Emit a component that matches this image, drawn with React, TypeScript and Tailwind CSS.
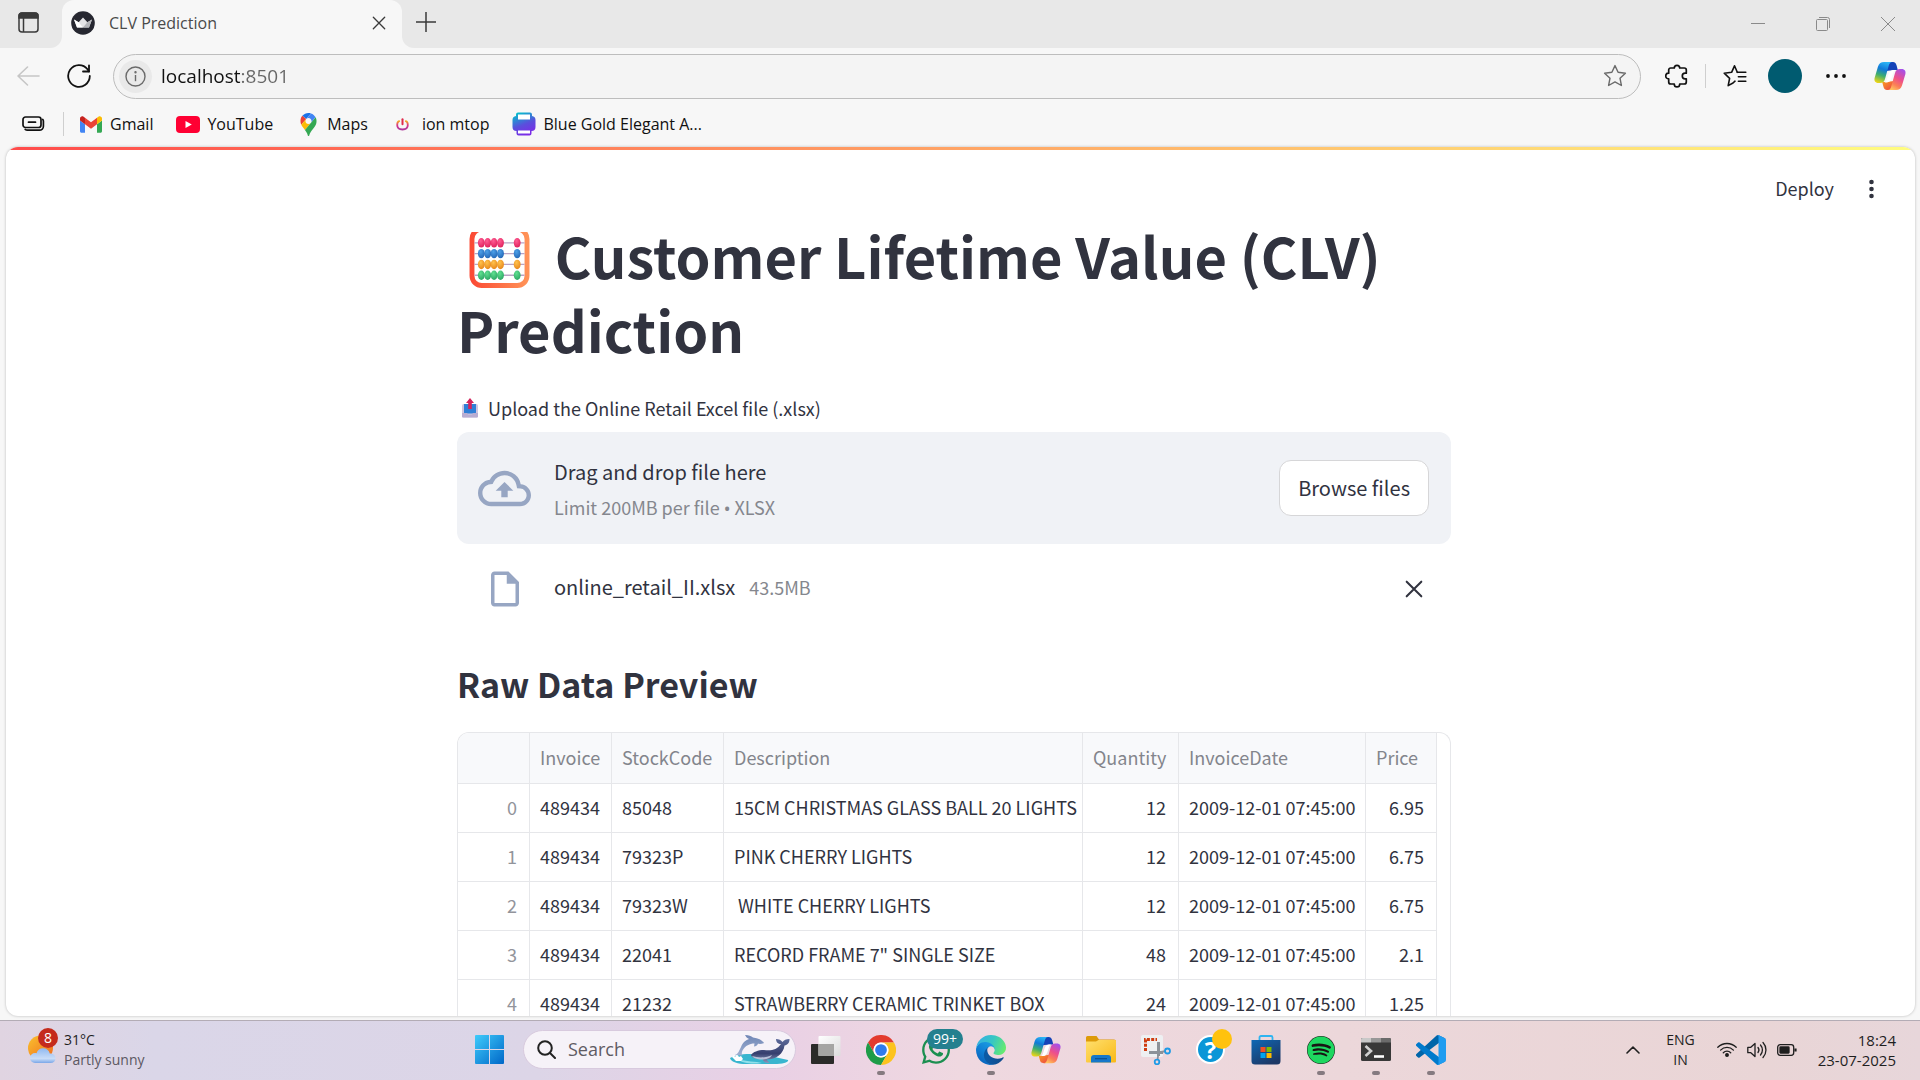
import type { ReactNode } from "react";
import { FaSpotify, FaWhatsapp } from "react-icons/fa";
import { MdOutlineCloudUpload, MdOutlineInsertDriveFile } from "react-icons/md";

/* ---------- browser icons ---------- */

function TabActionsIcon() {
  return (
    <svg width="21" height="21" viewBox="0 0 21 21" fill="none" stroke="#3a3a3a" strokeWidth="1.5">
      <rect x="1" y="1" width="19" height="19" rx="3" />
      <path d="M1 6V4a3 3 0 0 1 3-3h13a3 3 0 0 1 3 3v2z" fill="#3a3a3a" />
      <path d="M5.5 6v14" />
    </svg>
  );
}

function CrownIcon() {
  return (
    <svg width="24" height="24" viewBox="0 0 24 24">
      <circle cx="12" cy="12" r="11.8" fill="#262730" />
      <path d="M3 8.6l4.6 2.6L12 6.5l4.4 4.7L21 8.6 18 16.4H6z" fill="#e4e4e6" />
      <path d="M3 8.6l4.6 2.6L12 16.4H6z" fill="#fff" />
      <path d="M21 8.6l-4.6 2.6L12 16.4h6z" fill="#b4b5b9" />
    </svg>
  );
}

function CrossIcon({ size, color, width }: { size: number; color: string; width: number }) {
  return (
    <svg width={size} height={size} viewBox="0 0 16 16" fill="none" stroke={color} strokeWidth={width} strokeLinecap="round">
      <path d="M1.5 1.5l13 13M14.5 1.5l-13 13" />
    </svg>
  );
}

function StarIcon() {
  return (
    <svg width="24" height="24" viewBox="0 0 24 24" fill="none" stroke="#6b6b6b" strokeWidth="1.4" strokeLinejoin="round">
      <path d="M12 1.6l3.1 6.7 7.3.9-5.4 5 1.4 7.3-6.4-3.6-6.4 3.6L7 14.2l-5.4-5 7.3-.9z" />
    </svg>
  );
}

function FavoritesIcon() {
  return (
    <svg width="24" height="24" viewBox="0 0 24 24" fill="none" stroke="#111" strokeWidth="1.6" strokeLinejoin="round" strokeLinecap="round">
      <path d="M14.3 8.3L11.5 1.8 8.6 8.3l-7.4.9 5.4 5.1-1.4 7.3 4.8-2.6 2-1.8" />
      <path d="M14.3 8.3h8.5M15.4 12.7h7.4M15.4 17.2h7.4" />
    </svg>
  );
}

function PuzzleIcon() {
  return (
    <svg width="24" height="24" viewBox="0 0 24 24" fill="none" stroke="#111" strokeWidth="1.7" strokeLinejoin="round">
      <path d="M5.700 4h3.600a2.700 2.700 0 0 1 5.400 0h4.600a2 2 0 0 1 2 2v3.200h-1.200a2.800 2.800 0 0 0 0 5.600h1.200V18a2 2 0 0 1-2 2h-4.600v.2a2.700 2.700 0 0 1-5.400 0V20H5.700a2 2 0 0 1-2-2v-3.200h-.2a2.800 2.800 0 0 1 0-5.600h.2V6a2 2 0 0 1 2-2z" />
    </svg>
  );
}

function CopilotIcon({ id, size }: { id: string; size: number }) {
  return (
    <svg width={size} height={size} viewBox="0 0 32 30">
      <defs>
        <linearGradient id={`${id}-cool`} x1="0.6" y1="0" x2="0.3" y2="1">
          <stop offset="0" stopColor="#2bb4f5" />
          <stop offset="0.35" stopColor="#1179d8" />
          <stop offset="0.65" stopColor="#3fae6e" />
          <stop offset="1" stopColor="#e8d418" />
        </linearGradient>
        <linearGradient id={`${id}-warm`} x1="0.8" y1="0" x2="0.3" y2="1">
          <stop offset="0" stopColor="#a350ec" />
          <stop offset="0.45" stopColor="#ee4f8b" />
          <stop offset="0.75" stopColor="#fb7e57" />
          <stop offset="1" stopColor="#ffc35f" />
        </linearGradient>
        <linearGradient id={`${id}-orange`} x1="0" y1="0" x2="1" y2="1">
          <stop offset="0" stopColor="#fba01c" />
          <stop offset="1" stopColor="#ea3d4b" />
        </linearGradient>
      </defs>
      <path d="M13 3C14 1.6 15 1 18 1c3.400 0 4 1.500 4.600 3.600L23.800 9H20l-8 1z" fill="#1443b8" />
      <path d="M19 27c-1 1.400-2 2-5 2-3.400 0-4-1.500-4.600-3.600L8.200 21H12l8-1z" fill={`url(#${id}-orange)`} />
      <path d="M10 1h8.500c-2.400 0-3.200 1.800-3.800 3.800L11 18c-.9 3-2.400 4-5 4H4.500C1 22 0 19.500.6 17L4 5.500C5 2.200 7 1 10 1z" fill={`url(#${id}-cool)`} />
      <path d="M22 29h-8.500c2.400 0 3.200-1.800 3.800-3.800L21 12c.9-3 2.400-4 5-4h1.500c3.500 0 4.500 2.500 3.900 5L28 24.500C27 27.800 25 29 22 29z" fill={`url(#${id}-warm)`} />
      <path d="M20.500 9c-3.800 0-5 1.500-6 4.500l-1.500 4.500c-.7 2-1.300 3-2.500 3.500h1c3.800 0 5-1.500 6-4.500l1.500-4.500c.7-2 1.300-3 2.500-3.500z" fill="#fff" />
    </svg>
  );
}

function GmailIcon() {
  return (
    <svg width="22" height="17" viewBox="52 42 88 66">
      <path fill="#4285f4" d="M58 108h14V74L52 59v43c0 3.320 2.690 6 6 6" />
      <path fill="#34a853" d="M120 108h14c3.320 0 6-2.690 6-6V59l-20 15" />
      <path fill="#fbbc04" d="M120 48v26l20-15v-8c0-7.420-8.470-11.650-14.400-7.200" />
      <path fill="#ea4335" d="M72 74V48l24 18 24-18v26L96 92" />
      <path fill="#c5221f" d="M52 51v8l20 15V48l-5.600-4.200c-5.940-4.450-14.400-.22-14.400 7.200" />
    </svg>
  );
}

function YouTubeIcon() {
  return (
    <svg width="24" height="17" viewBox="0 0 24 17">
      <rect width="24" height="17" rx="4" fill="#ff0033" />
      <path d="M9.500 5v7l6.300-3.500z" fill="#fff" />
    </svg>
  );
}

function MapsIcon() {
  return (
    <svg width="17" height="23" viewBox="0 0 92.300 132.300">
      <path fill="#1a73e8" d="M60.200 2.200C55.800.8 51 0 46.100 0 32 0 19.300 6.400 10.800 16.500l21.800 18.300L60.200 2.200z" />
      <path fill="#ea4335" d="M10.800 16.500C4.100 24.500 0 34.900 0 46.100c0 8.700 1.700 15.700 4.600 22l28-33.300-21.800-18.300z" />
      <path fill="#4285f4" d="M46.200 28.500c9.800 0 17.700 7.900 17.700 17.700 0 4.300-1.600 8.300-4.200 11.400 0 0 13.900-16.600 27.500-32.700-5.600-10.800-15.300-19-27-22.700L32.600 34.800c3.300-3.800 8.100-6.300 13.600-6.300" />
      <path fill="#fbbc04" d="M46.200 63.800c-9.800 0-17.700-7.900-17.700-17.700 0-4.300 1.500-8.300 4.100-11.300l-28 33.300c4.800 10.600 12.800 19.200 21 29.900l34.100-40.500c-3.300 3.900-8.100 6.300-13.500 6.300" />
      <path fill="#34a853" d="M59.100 109.200c15.400-24.100 33.300-35 33.300-63 0-7.700-1.900-14.900-5.200-21.300L25.600 98c2.600 3.400 5.300 7.300 7.900 11.300 9.400 14.500 6.800 23.100 12.800 23.100s3.400-8.700 12.800-23.200" />
    </svg>
  );
}

function IonIcon() {
  return (
    <svg width="13" height="13" viewBox="0 0 13 13" fill="none" strokeLinecap="round">
      <defs>
        <linearGradient id="ion" x1="0" y1="0" x2="0" y2="1">
          <stop offset="0" stopColor="#f5a623" />
          <stop offset="0.5" stopColor="#d6338a" />
          <stop offset="1" stopColor="#b03a9b" />
        </linearGradient>
      </defs>
      <path d="M3.200 3.200C1.500 3.600 1.200 5 1.200 7c0 3 1.300 4.500 5.300 4.500s5.300-1.500 5.300-4.500c0-2-.3-3.400-2-3.800" stroke="url(#ion)" strokeWidth="1.800" />
      <path d="M6.500 1.200v5" stroke="#e02b4b" strokeWidth="2" />
    </svg>
  );
}

function PrinterIcon() {
  return (
    <svg width="24" height="24" viewBox="0 0 24 24">
      <defs>
        <linearGradient id="printer" x1="0.2" y1="0" x2="0.6" y2="1">
          <stop offset="0" stopColor="#00c4cc" />
          <stop offset="0.55" stopColor="#5a4fdc" />
          <stop offset="1" stopColor="#7d2ae8" />
        </linearGradient>
      </defs>
      <path d="M6 .5h12a2 2 0 0 1 2 2V4a4 4 0 0 1 3.500 4v7a4 4 0 0 1-4 4v2.500a2 2 0 0 1-2 2h-11a2 2 0 0 1-2-2V19a4 4 0 0 1-4-4V8A4 4 0 0 1 4 4V2.500a2 2 0 0 1 2-2z" fill="url(#printer)" />
      <rect x="6" y="2.500" width="12" height="5" fill="#fff" />
      <rect x="6" y="18.500" width="12" height="3" fill="#fff" />
    </svg>
  );
}

/* ---------- page icons ---------- */

function AbacusIcon() {
  const rows = [
    { y: 11, light: "#ff5c93", dark: "#e0245e" },
    { y: 22, light: "#4da0e8", dark: "#2669b8" },
    { y: 33, light: "#ffc24d", dark: "#e8891c" },
    { y: 44, light: "#5fe090", dark: "#2ea866" },
  ];
  return (
    <svg className="mr-3 ml-3 inline-block h-[57px] w-[61px] align-[-10px]" viewBox="0 0 61 58" aria-label="abacus">
      <defs>
        <linearGradient id="frame" x1="0" y1="0" x2="1" y2="0">
          <stop offset="0" stopColor="#fb4b35" />
          <stop offset="1" stopColor="#ff9257" />
        </linearGradient>
        {rows.map((r) => (
          <radialGradient key={r.y} id={`bead-${r.y}`} cx="0.4" cy="0.3" r="0.7">
            <stop offset="0" stopColor={r.light} />
            <stop offset="1" stopColor={r.dark} />
          </radialGradient>
        ))}
      </defs>
      <rect x="2.500" y="-3" width="56" height="57.500" rx="10" fill="none" stroke="url(#frame)" strokeWidth="5" />
      {rows.map((r) => (
        <g key={r.y}>
          <path d={`M5 ${r.y}h51`} stroke="#b9a3c4" strokeWidth="1.300" />
          {[12, 18.500, 25, 31.500, 48.500].map((x) => (
            <ellipse key={x} cx={x} cy={r.y} rx="3.500" ry="4.800" fill={`url(#bead-${r.y})`} />
          ))}
        </g>
      ))}
    </svg>
  );
}

function OutboxIcon() {
  return (
    <svg width="16" height="20" viewBox="0 0 16 20" aria-hidden="true">
      <rect x="0" y="6" width="16" height="13.500" rx="1.500" fill="#cfc6e0" />
      <path d="M2 6h12v8.500a1 1 0 0 1-1 1H3a1 1 0 0 1-1-1z" fill="#2f7fd6" />
      <path d="M0 15h5l1 1.500h4l1-1.500h5v3.500a1 1 0 0 1-1 1H1a1 1 0 0 1-1-1z" fill="#b8add2" />
      <path d="M8 0l4 5H9.800v6H6.200V5H4z" fill="#d3245c" />
    </svg>
  );
}

/* ---------- taskbar icons ---------- */

function WeatherIcon() {
  return (
    <svg width="28" height="29" viewBox="0 0 28 29">
      <defs>
        <linearGradient id="sun" x1="0" y1="0" x2="1" y2="1">
          <stop offset="0" stopColor="#f9c22e" />
          <stop offset="1" stopColor="#f0681f" />
        </linearGradient>
        <linearGradient id="cloud" x1="0" y1="0" x2="0" y2="1">
          <stop offset="0" stopColor="#8fb8f0" />
          <stop offset="0.7" stopColor="#c9ddf8" />
          <stop offset="1" stopColor="#7ba7e8" />
        </linearGradient>
      </defs>
      <circle cx="12.500" cy="13" r="12.500" fill="url(#sun)" />
      <path d="M7 28a5 5 0 0 1 0-10c.6 0 1 0 1.500.2C9.500 15 12 13.200 15 13.200c3.500 0 6 2 6.800 5.200 3.200 0 5.700 1.800 5.700 4.800S25.500 28 22.500 28z" fill="url(#cloud)" />
    </svg>
  );
}

function StartIcon() {
  return (
    <svg width="29" height="29" viewBox="0 0 29 29">
      <defs>
        <linearGradient id="start" gradientUnits="userSpaceOnUse" x1="0" y1="0" x2="29" y2="29">
          <stop offset="0" stopColor="#3fcbfb" />
          <stop offset="1" stopColor="#0067c8" />
        </linearGradient>
      </defs>
      <path d="M1 0h13v14H0V1a1 1 0 0 1 1-1zM15 0h13a1 1 0 0 1 1 1v13H15zM0 15h14v14H1a1 1 0 0 1-1-1zM15 15h14v13a1 1 0 0 1-1 1H15z" fill="url(#start)" />
    </svg>
  );
}

function DolphinArt() {
  return (
    <svg width="60" height="30" viewBox="0 0 60 30">
      <defs>
        <linearGradient id="dolphin" x1="0" y1="0" x2="0" y2="1">
          <stop offset="0" stopColor="#6f86b5" />
          <stop offset="1" stopColor="#9fb0d2" />
        </linearGradient>
        <linearGradient id="whale" x1="0" y1="0" x2="0" y2="1">
          <stop offset="0" stopColor="#5d6a9a" />
          <stop offset="0.6" stopColor="#363f6e" />
          <stop offset="1" stopColor="#8c96ba" />
        </linearGradient>
      </defs>
      <path d="M0 23c4-2 10-4 20-4l20 2 18 4c1 2-5 4-14 4H16C8 29 1 27 0 23z" fill="#39b6cf" />
      <path d="M8 24c8 3 18 2 24 4-8 1-20 1-24-4z" fill="#8fe0ea" />
      <path d="M2 22l2-2 1 2 2-3 2 3 2-1 2 3-2 2H6z" fill="#fff" />
      <path d="M5 20c3-1 4-4 6-8C13 7 16 5 19 4c-2-1-3-2-4-4 4 0 6 1 8 2.500C28 3 32 5 34 8c-2 1-4 1-6 .8-1 2-2 2.700-4 2.700l.5-3c-5 0-9 2-12 7-1 2-1 4 0 5z" fill="url(#dolphin)" />
      <path d="M21 20c2-3 7-5 13-5 7 1 13 0 17-6-3 0-5-2-5-5 3 0 5 1 6.500 3C54 5 56 4 59.500 4c0 4-2 6-5 6.500-1 8-8 14-18 14l3 3.500c-4 0-6-1-7-4-6 0-11-1-11.500-4z" fill="url(#whale)" />
      <path d="M22 21c6 2 14 2 20-1-2 4-8 5-12 4.500s-7-1.500-8-3.500z" fill="#b9c1d8" />
    </svg>
  );
}

function TaskViewIcon() {
  return (
    <svg width="30" height="28" viewBox="0 0 30 28">
      <defs>
        <linearGradient id="pane" x1="0" y1="0" x2="1" y2="1">
          <stop offset="0" stopColor="#fff" />
          <stop offset="1" stopColor="#dcdcdc" />
        </linearGradient>
      </defs>
      <rect x="0" y="8" width="23" height="20" rx="1" fill="#2b2b29" />
      <rect x="7.500" y="0" width="22" height="20" rx="1" fill="url(#pane)" />
      <path d="M7.500 8H23v12H7.500z" fill="#a5a5a3" />
    </svg>
  );
}

function ChromeIcon() {
  return (
    <svg width="30" height="30" viewBox="0 0 48 48">
      <path d="M3.200 12A24 24 0 0 1 44.800 12H24a12 12 0 0 0-10.400 18z" fill="#e33b2e" />
      <path d="M3.200 12l10.400 18A12 12 0 0 0 34.400 30L24 48A24 24 0 0 1 3.200 12z" fill="#1e9c48" />
      <path d="M44.800 12H24a12 12 0 0 1 10.400 18L24 48A24 24 0 0 0 44.800 12z" fill="#fcc31e" />
      <circle cx="24" cy="24" r="12" fill="#fff" />
      <circle cx="24" cy="24" r="9.400" fill="#2f7bed" />
    </svg>
  );
}

function EdgeIcon() {
  return (
    <svg width="30" height="30" viewBox="0 0 256 256">
      <defs>
        <linearGradient id="edge-a" x1="0.2" y1="0.5" x2="1" y2="0.5">
          <stop offset="0" stopColor="#0c59a4" />
          <stop offset="1" stopColor="#114a8b" />
        </linearGradient>
        <linearGradient id="edge-b" x1="0.8" y1="0.1" x2="0.3" y2="1">
          <stop offset="0" stopColor="#1b9de2" />
          <stop offset="0.5" stopColor="#0f7fd4" />
          <stop offset="1" stopColor="#0a5fb8" />
        </linearGradient>
        <linearGradient id="edge-c" x1="0" y1="0.3" x2="1" y2="0.6">
          <stop offset="0" stopColor="#35b0e4" />
          <stop offset="0.5" stopColor="#37c6c4" />
          <stop offset="1" stopColor="#66eb6e" />
        </linearGradient>
      </defs>
      <path fill="url(#edge-a)" d="M231 190.500c-3.400 1.800-6.900 3.400-10.500 4.700a101.700 101.700 0 0 1-35.900 6.400c-47.300 0-88.500-32.500-88.500-74.300 .1-11.400 6.400-21.900 16.400-27.300-42.800 1.800-53.800 46.400-53.800 72.500 0 73.900 68.100 81.400 82.800 81.400 7.900 0 19.800-2.300 27-4.600l1.300-.4a128.300 128.300 0 0 0 66.600-52.800 4 4 0 0 0-5.400-5.600z" />
      <path fill="url(#edge-b)" d="M105.700 241.400a79.200 79.200 0 0 1-22.700-21.300 80.700 80.700 0 0 1 29.500-120c3.200-1.500 8.500-4.100 15.600-4a32.400 32.400 0 0 1 25.700 13 31.900 31.900 0 0 1 6.300 18.700c0-.2 24.500-79.600-80-79.600-43.900 0-80 41.600-80 78.200a130.200 130.200 0 0 0 12.100 56 128 128 0 0 0 156.400 67 75.500 75.500 0 0 1-62.800-8z" />
      <path fill="url(#edge-c)" d="M152.300 148.900c-.9 1-3.400 2.500-3.400 5.600 0 2.600 1.700 5.200 4.800 7.300 14.300 10 41.400 8.600 41.500 8.600 10.700 0 21.100-2.900 30.300-8.300A61.400 61.400 0 0 0 256 109c.3-22.400-8-37.300-11.300-43.900C223.500 23.900 177.700 0 128 0A128 128 0 0 0 0 126.200c.5-36.500 36.800-66 80-66 3.500 0 23.500.3 42 10.100 16.300 8.600 24.900 18.900 30.800 29.200 6.200 10.700 7.300 24.100 7.300 29.500s-2.700 13.300-7.800 19.900z" />
    </svg>
  );
}

function ExplorerIcon() {
  return (
    <svg width="30" height="27" viewBox="0 0 30 27">
      <defs>
        <linearGradient id="folder" x1="0" y1="0" x2="1" y2="1">
          <stop offset="0" stopColor="#ffdf6e" />
          <stop offset="1" stopColor="#f9b917" />
        </linearGradient>
      </defs>
      <path d="M0 1.500A1.500 1.500 0 0 1 1.500 0h9L13 3.500h15A2 2 0 0 1 30 5v6H0z" fill="#dd9a09" />
      <path d="M0 5.500h10L12.500 4H29a1 1 0 0 1 1 1v20.500a1 1 0 0 1-1 1H1a1 1 0 0 1-1-1z" fill="url(#folder)" />
      <path d="M5 26.500V22a3 3 0 0 1 3-3h14a3 3 0 0 1 3 3v4.500z" fill="#1677c9" />
      <path d="M9 22.700h12" stroke="#0b4f8f" strokeWidth="1.200" />
    </svg>
  );
}

function SnippingIcon() {
  return (
    <svg width="30" height="30" viewBox="0 0 30 30" fill="none">
      <rect x="0" y="0" width="22" height="22" rx="2" fill="#eef0f2" />
      <path d="M4.500 16V4.500H16" stroke="#cf3c10" strokeWidth="3" strokeDasharray="3 1.300" />
      <path d="M17.500 7v14M8 17.500h14" stroke="#8c9299" strokeWidth="3" />
      <path d="M17.500 17.500L16.500 25M17.500 17.500L25 16" stroke="#8c9299" strokeWidth="1.800" />
      <circle cx="26.500" cy="16" r="2.500" stroke="#1e9be6" strokeWidth="1.800" />
      <circle cx="16" cy="27" r="2.300" stroke="#1e9be6" strokeWidth="1.800" />
    </svg>
  );
}

function StoreIcon() {
  return (
    <svg width="30" height="30" viewBox="0 0 30 30">
      <defs>
        <linearGradient id="bag" x1="0" y1="0" x2="0.6" y2="1">
          <stop offset="0" stopColor="#0f68b5" />
          <stop offset="1" stopColor="#1d3866" />
        </linearGradient>
      </defs>
      <path d="M8.500 7V2.500A1.500 1.500 0 0 1 10 1h10a1.500 1.500 0 0 1 1.500 1.500V7" fill="none" stroke="#2fb4f0" strokeWidth="1.800" />
      <path d="M.5 5h29v21a3.500 3.500 0 0 1-3.500 3.500H4A3.500 3.500 0 0 1 .5 26z" fill="url(#bag)" />
      <path d="M9.500 12h5v5h-5z" fill="#f25022" />
      <path d="M15.500 12h5v5h-5z" fill="#7fba00" />
      <path d="M9.500 18h5v5h-5z" fill="#00a4ef" />
      <path d="M15.500 18h5v5h-5z" fill="#ffb900" />
    </svg>
  );
}

function TerminalIcon() {
  return (
    <svg width="30" height="23" viewBox="0 0 30 23">
      <rect width="30" height="23" rx="1.500" fill="#383838" />
      <path d="M1.500 0H10v4.500H0v-3A1.500 1.500 0 0 1 1.500 0z" fill="#c8c8c8" />
      <path d="M10 0h10v4.500H10z" fill="#979797" />
      <path d="M20 0h8.500A1.500 1.500 0 0 1 30 1.500v3H20z" fill="#6b6b6b" />
      <path d="M4.500 8l5.500 5-5.500 5" fill="none" stroke="#d0d0d0" strokeWidth="2.600" />
      <path d="M13 18.500h10" stroke="#fff" strokeWidth="2.600" />
    </svg>
  );
}

function VSCodeIcon() {
  return (
    <svg width="30" height="30" viewBox="0 0 100 100">
      <path fill="#0065a9" d="M96.460 10.800L75.860.88C73.470-.27 70.620.21 68.750 2.080L1.300 63.580c-1.820 1.660-1.810 4.510 0 6.170l5.510 5c1.490 1.350 3.720 1.450 5.320.24L93.360 13.370c2.730-2.070 6.640-.13 6.640 3.300v-.24c0-2.400-1.380-4.590-3.540-5.630z" />
      <path fill="#007acc" d="M96.460 89.200L75.860 99.120c-2.390 1.150-5.240.67-7.110-1.200L1.300 36.420c-1.820-1.660-1.810-4.510 0-6.170l5.510-5c1.490-1.350 3.720-1.450 5.320-.24l81.230 61.620c2.730 2.070 6.640.13 6.640-3.300v.24c0 2.400-1.380 4.590-3.540 5.630z" />
      <path fill="#1f9cf0" d="M75.860 99.130c-2.390 1.150-5.240.66-7.110-1.210C71.060 100.220 75 98.590 75 95.330V4.670C75 1.410 71.060-.22 68.750 2.080 70.620.21 73.470-.27 75.860.87l20.600 9.910C98.620 11.820 100 14.010 100 16.410v67.180c0 2.400-1.380 4.590-3.540 5.630z" />
    </svg>
  );
}

/* ---------- browser chrome ---------- */

function TabStrip() {
  return (
    <div className="flex h-12 shrink-0 bg-[#f7f7f7]">
      <div className="flex w-[62px] items-center rounded-br-xl bg-[#e8e8e8] pb-1 pl-[18px]">
        <button aria-label="Tab actions">
          <TabActionsIcon />
        </button>
      </div>
      <div className="w-[340px] bg-[#e8e8e8]">
        <div className="flex h-full items-center rounded-t-xl bg-[#f7f7f7] pr-4 pb-[3px] pl-[9px]">
          <CrownIcon />
          <span className="ml-[14px] flex-1 text-[16px] text-[#4a4a4a]">CLV Prediction</span>
          <button aria-label="Close tab">
            <CrossIcon size={14} color="#3a3a3a" width={1.5} />
          </button>
        </div>
      </div>
      <div className="flex flex-1 items-center justify-between rounded-bl-xl bg-[#e8e8e8] pr-[25px] pb-1 pl-[14px]">
        <button aria-label="New tab">
          <svg width="20" height="20" viewBox="0 0 20 20" stroke="#3a3a3a" strokeWidth="1.500">
            <path d="M10 0v20M0 10h20" />
          </svg>
        </button>
        <div className="flex items-center gap-[51px] pt-1 text-[#8a8a8a]">
          <button aria-label="Minimize">
            <svg width="14" height="14" viewBox="0 0 14 14" stroke="currentColor">
              <path d="M0 6.500h14" />
            </svg>
          </button>
          <button aria-label="Restore">
            <svg width="14" height="14" viewBox="0 0 14 14" fill="none" stroke="currentColor">
              <rect x="0.500" y="2.500" width="11" height="11" rx="1" />
              <path d="M3 .5h8.500a2 2 0 0 1 2 2V11" />
            </svg>
          </button>
          <button aria-label="Close">
            <svg width="14" height="14" viewBox="0 0 14 14" stroke="currentColor">
              <path d="M0 0l14 14M14 0L0 14" />
            </svg>
          </button>
        </div>
      </div>
    </div>
  );
}

function Toolbar() {
  return (
    <div className="flex h-[56px] shrink-0 items-center bg-[#f7f7f7]">
      <button aria-label="Back" className="ml-[17px]">
        <svg width="23" height="20" viewBox="0 0 23 20" fill="none" stroke="#c6c6c6" strokeWidth="1.600" strokeLinecap="round" strokeLinejoin="round">
          <path d="M10.500 1L1 10l9.500 9M1 10h21" />
        </svg>
      </button>
      <button aria-label="Refresh" className="ml-[27px]">
        <svg width="24" height="24" viewBox="0 0 24 24" fill="none" stroke="#111" strokeWidth="1.800" strokeLinecap="round" strokeLinejoin="round">
          <path d="M22.800 12A10.800 10.800 0 1 1 20.500 5.300L22 7.500" />
          <path d="M22 1.500v6h-6" />
        </svg>
      </button>
      <div className="ml-[22px] flex h-[45px] flex-1 items-center rounded-full border border-[#bdbdbd] bg-[#f4f4f4] pr-[13px] pl-[5px]">
        <button aria-label="View site information" className="flex size-[33px] items-center justify-center rounded-full bg-[#e9e9e9]">
          <svg width="21" height="21" viewBox="0 0 21 21" fill="none" stroke="#6a6a6a" strokeWidth="1.400">
            <circle cx="10.500" cy="10.500" r="9.500" />
            <path d="M10.500 9v6.200" />
            <circle cx="10.500" cy="6.300" r="0.500" fill="#6a6a6a" />
          </svg>
        </button>
        <input
          aria-label="Address and search bar"
          defaultValue="localhost:8501"
          className="ml-[9px] h-8 flex-1 bg-[linear-gradient(to_right,#111_80px,#666_80px)] bg-clip-text text-[19px] text-transparent outline-none"
        />
        <button aria-label="Add this page to favorites">
          <StarIcon />
        </button>
      </div>
      <button aria-label="Extensions" className="ml-2 flex w-[56px] justify-center">
        <PuzzleIcon />
      </button>
      <div className="h-6 w-px bg-[#cfcfcf]" />
      <button aria-label="Favorites" className="flex w-[58px] justify-center">
        <FavoritesIcon />
      </button>
      <button aria-label="Profile" className="mx-1 size-[34px] rounded-full bg-[#005b70]" />
      <button aria-label="Settings and more" className="mr-2 flex w-[60px] justify-center">
        <svg width="20" height="4" viewBox="0 0 20 4" fill="#111">
          <circle cx="2" cy="2" r="1.900" />
          <circle cx="10" cy="2" r="1.900" />
          <circle cx="18" cy="2" r="1.900" />
        </svg>
      </button>
      <button aria-label="Copilot" className="mr-[14px]">
        <CopilotIcon id="bar" size={32} />
      </button>
    </div>
  );
}

const bookmarks: { label: string; icon: ReactNode }[] = [
  { label: "Gmail", icon: <GmailIcon /> },
  { label: "YouTube", icon: <YouTubeIcon /> },
  { label: "Maps", icon: <MapsIcon /> },
  { label: "ion mtop", icon: <IonIcon /> },
  { label: "Blue Gold Elegant A...", icon: <PrinterIcon /> },
];

function BookmarksBar() {
  return (
    <nav className="flex h-[43px] shrink-0 items-center bg-[#f7f7f7] pb-[3px] pl-[22px]">
      <button aria-label="Workspaces">
        <svg width="23" height="16" viewBox="0 0 23 16" fill="none" stroke="#111" strokeWidth="1.700" strokeLinecap="round">
          <rect x="1" y="1" width="18" height="10.500" rx="2.500" />
          <path d="M6.500 6.200h7" />
          <path d="M20.800 3.500c.4.500.6 1 .6 1.700v5a4 4 0 0 1-4 4H5.500c-1 0-1.700-.3-2.300-.9" />
        </svg>
      </button>
      <div className="mr-[15px] ml-[18px] h-6 w-px bg-[#cfcfcf]" />
      <div className="flex items-center gap-[23px]">
        {bookmarks.map((b) => (
          <a key={b.label} href="#" className="flex items-center gap-[7px] text-[16px] text-[#111]">
            <span className="flex w-6 justify-center">{b.icon}</span>
            {b.label}
          </a>
        ))}
      </div>
    </nav>
  );
}

/* ---------- app page ---------- */

const columns = ["Invoice", "StockCode", "Description", "Quantity", "InvoiceDate", "Price"];

const rows = [
  ["489434", "85048", "15CM CHRISTMAS GLASS BALL 20 LIGHTS", "12", "2009-12-01 07:45:00", "6.95"],
  ["489434", "79323P", "PINK CHERRY LIGHTS", "12", "2009-12-01 07:45:00", "6.75"],
  ["489434", "79323W", " WHITE CHERRY LIGHTS", "12", "2009-12-01 07:45:00", "6.75"],
  ["489434", "22041", "RECORD FRAME 7\" SINGLE SIZE", "48", "2009-12-01 07:45:00", "2.1"],
  ["489434", "21232", "STRAWBERRY CERAMIC TRINKET BOX", "24", "2009-12-01 07:45:00", "1.25"],
];

const numeric = [false, false, false, true, false, true];

function DataTable() {
  return (
    <div className="mt-[26px] overflow-hidden rounded-t-xl border border-b-0 border-[#e6e7ea]">
      <table className="w-[calc(100%-13px)] table-fixed border-separate border-spacing-0 text-[18px] text-[#31333f]">
        <colgroup>
          <col className="w-[72px]" />
          <col className="w-[82px]" />
          <col className="w-[112px]" />
          <col />
          <col className="w-[96px]" />
          <col className="w-[187px]" />
          <col className="w-[71px]" />
        </colgroup>
        <thead>
          <tr className="h-[51px] bg-[#f8f9fb] text-left text-[#83858c]">
            <th scope="col" aria-label="Index" className="border-r border-b border-[#e6e7ea]" />
            {columns.map((c) => (
              <th key={c} scope="col" className="border-r border-b border-[#e6e7ea] px-[10px] pb-px font-normal">
                {c}
              </th>
            ))}
          </tr>
        </thead>
        <tbody>
          {rows.map((row, i) => (
            <tr key={i} className="h-[49px]">
              <td className="border-r border-b border-[#e6e7ea] pr-3 pb-[2px] text-right text-[#92949b]">{i}</td>
              {row.map((cell, j) => (
                <td
                  key={j}
                  className={
                    numeric[j]
                      ? "border-r border-b border-[#e6e7ea] pr-3 pb-[2px] text-right whitespace-pre"
                      : "border-r border-b border-[#e6e7ea] pb-[2px] pl-[10px] whitespace-pre"
                  }
                >
                  {cell}
                </td>
              ))}
            </tr>
          ))}
        </tbody>
      </table>
    </div>
  );
}

function AppPage() {
  return (
    <div className="mr-[5px] ml-[6px] flex min-h-0 flex-1 flex-col overflow-hidden rounded-xl bg-white font-['Noto_Sans_CJK_SC',sans-serif] text-[#31333f] shadow-[0_0_3px_rgba(0,0,0,0.25)]">
      <div className="h-[3px] shrink-0 bg-[linear-gradient(to_right,#ff4b4b,#fffd80)]" />
      <header className="flex h-[60px] shrink-0 items-center justify-end pt-[18px] pr-[41px]">
        <button className="pb-[2px] text-[18px] leading-6">Deploy</button>
        <button aria-label="Main menu" className="ml-[35px]">
          <svg width="5" height="20" viewBox="0 0 5 20" fill="#31333f">
            <circle cx="2.500" cy="3" r="2.300" />
            <circle cx="2.500" cy="10" r="2.300" />
            <circle cx="2.500" cy="17" r="2.300" />
          </svg>
        </button>
      </header>
      <main className="min-h-0 flex-1 overflow-hidden pt-2 pr-[13px]">
        <div className="mx-auto w-full max-w-[994px]">
          <h1 className="text-[56px] leading-[74px] font-bold">
            <AbacusIcon /> Customer Lifetime Value (CLV) Prediction
          </h1>
          <label htmlFor="upload" className="mt-[28px] flex h-7 items-center gap-[10px] pl-[5px] text-[18px]">
            <OutboxIcon />
            Upload the Online Retail Excel file (.xlsx)
          </label>
          <input id="upload" type="file" accept=".xlsx" className="hidden" />
          <section className="mt-[10px] flex h-28 items-center rounded-xl bg-[#f0f2f6] pr-[22px] pl-[21px]">
            <MdOutlineCloudUpload size={53} color="#97a6c3" />
            <div className="ml-[23px] flex-1 pt-1">
              <div className="text-[20px] leading-8">Drag and drop file here</div>
              <div className="mt-[3px] text-[18px] leading-8 text-[#85878e]">
                Limit 200MB per file <span className="font-['Noto_Sans']">•</span> XLSX
              </div>
            </div>
            <button className="h-[56px] rounded-xl border border-[#d6d6d8] bg-white px-[18px] text-[20px]">Browse files</button>
          </section>
          <div className="mt-5 flex h-[50px] items-center pr-7 pl-[27px]">
            <MdOutlineInsertDriveFile size={42} color="#97a6c3" />
            <span className="ml-[28px] pb-[5px] text-[20px]">online_retail_II.xlsx</span>
            <span className="ml-[14px] flex-1 pb-1 text-[18px] text-[#85878e]">43.5MB</span>
            <button aria-label="Remove file">
              <CrossIcon size={18} color="#31333f" width={1.8} />
            </button>
          </div>
          <h2 className="mt-[48px] text-[34px] leading-[44px] font-semibold">Raw Data Preview</h2>
          <DataTable />
        </div>
      </main>
    </div>
  );
}

/* ---------- taskbar ---------- */

const apps: { name: string; icon: ReactNode; running?: boolean; badge?: ReactNode }[] = [
  { name: "Task view", icon: <TaskViewIcon /> },
  { name: "Chrome", icon: <ChromeIcon />, running: true },
  {
    name: "WhatsApp",
    icon: <FaWhatsapp size={32} color="#1c8f50" />,
    badge: <span className="absolute top-[8px] left-[19px] rounded-[10px] bg-[#24808f] px-[6px] text-[14px] leading-5 text-white">99+</span>,
  },
  { name: "Edge", icon: <EdgeIcon />, running: true },
  { name: "Copilot", icon: <CopilotIcon id="task" size={30} /> },
  { name: "File Explorer", icon: <ExplorerIcon /> },
  { name: "Snipping Tool", icon: <SnippingIcon /> },
  {
    name: "Get Help",
    icon: (
      <span className="flex size-[29px] items-center justify-center rounded-full border-2 border-white bg-[#0a96d7] text-[24px] leading-none font-bold text-white">
        ?
      </span>
    ),
    badge: <span className="absolute top-[8px] left-[29px] size-5 rounded-full bg-[#ffc20e]" />,
  },
  { name: "Microsoft Store", icon: <StoreIcon /> },
  {
    name: "Spotify",
    icon: (
      <span className="rounded-full bg-[#191414]">
        <FaSpotify size={28} color="#1ed760" />
      </span>
    ),
    running: true,
  },
  { name: "Terminal", icon: <TerminalIcon />, running: true },
  { name: "Visual Studio Code", icon: <VSCodeIcon />, running: true },
];

function Taskbar() {
  return (
    <footer className="mt-1 grid h-[60px] shrink-0 grid-cols-[1fr_auto_1fr] border-t border-[#b3acb5] bg-[linear-gradient(to_right,#e0d4e1_0%,#dad6e8_8%,#dcd5e7_28%,#e9d0e5_40%,#efd8e0_50%,#ecd7da_70%,#e9d5d6_92%,#e7d6da_100%)] pb-[2px] text-[14px] text-[#1f1f1f]">
      <button className="relative flex items-center pl-7 text-left">
        <WeatherIcon />
        <span className="absolute top-[7px] left-[38px] size-5 rounded-full bg-[#c42b1c] text-center text-[14px] leading-5 text-white">8</span>
        <span className="ml-2 leading-5">
          <span className="block">31°C</span>
          <span className="block text-[#5c5862]">Partly sunny</span>
        </span>
      </button>
      <div className="flex items-center">
        <button aria-label="Start" className="flex w-[55px] justify-center">
          <StartIcon />
        </button>
        <label className="mr-[2px] ml-[6px] flex h-[39px] w-[273px] items-center rounded-full border border-[#d8cade] bg-[#f6f2f8] pr-[5px] pl-[13px]">
          <svg width="19" height="19" viewBox="0 0 19 19" fill="none" stroke="#222" strokeWidth="2" strokeLinecap="round">
            <circle cx="8" cy="8" r="6.800" />
            <path d="M13 13l5 5" />
          </svg>
          <input aria-label="Search" placeholder="Search" className="ml-3 w-0 flex-1 text-[18px] outline-none placeholder:text-[#5f5b63]" />
          <DolphinArt />
        </label>
        {apps.map((app) => (
          <button key={app.name} aria-label={app.name} className="relative flex h-[57px] w-[55px] items-center justify-center">
            {app.icon}
            {app.badge}
            {app.running && <span className="absolute bottom-[3px] left-[24px] h-1 w-2 rounded-full bg-[#857a80]" />}
          </button>
        ))}
      </div>
      <div className="flex items-center justify-end pr-6 text-center leading-5">
        <button aria-label="Show hidden icons">
          <svg width="14" height="8" viewBox="0 0 14 8" fill="none" stroke="#1f1f1f" strokeWidth="1.600" strokeLinecap="round" strokeLinejoin="round">
            <path d="M1 7l6-6 6 6" />
          </svg>
        </button>
        <button className="ml-[26px]">
          ENG
          <br />
          IN
        </button>
        <button aria-label="Network, volume and battery" className="ml-[22px] flex items-center gap-[10px]">
          <svg width="20" height="15" viewBox="0 0 20 15" fill="none" stroke="#1f1f1f" strokeWidth="1.300" strokeLinecap="round">
            <path d="M.8 5.300a13 13 0 0 1 18.400 0M3.600 8.100a9 9 0 0 1 12.800 0M6.300 10.700a5.200 5.200 0 0 1 7.400 0" />
            <circle cx="10" cy="13" r="1.300" fill="#1f1f1f" />
          </svg>
          <svg width="20" height="18" viewBox="0 0 20 18" fill="none" stroke="#1f1f1f" strokeWidth="1.300" strokeLinecap="round" strokeLinejoin="round">
            <path d="M.8 6.300h3L8 2.500v13l-4.200-3.800h-3zM11 6.500a4 4 0 0 1 0 5M13.500 4a7.500 7.500 0 0 1 0 10M16 1.500a11 11 0 0 1 0 15" />
          </svg>
          <svg width="20" height="12" viewBox="0 0 20 12" fill="none" stroke="#1f1f1f" strokeWidth="1.300">
            <rect x="0.700" y="0.700" width="16" height="10.600" rx="2.500" />
            <rect x="3" y="3" width="9" height="6" rx="0.500" fill="#1f1f1f" />
            <path d="M18.500 4.500v3" strokeWidth="2.200" />
          </svg>
        </button>
        <button className="ml-[21px] text-right text-[15px] leading-5">
          18:24
          <br />
          23-07-2025
        </button>
      </div>
    </footer>
  );
}

export default function App() {
  return (
    <div className="flex h-screen flex-col overflow-hidden bg-[#f7f7f7] font-['Open_Sans',sans-serif]">
      <TabStrip />
      <Toolbar />
      <BookmarksBar />
      <AppPage />
      <Taskbar />
    </div>
  );
}
